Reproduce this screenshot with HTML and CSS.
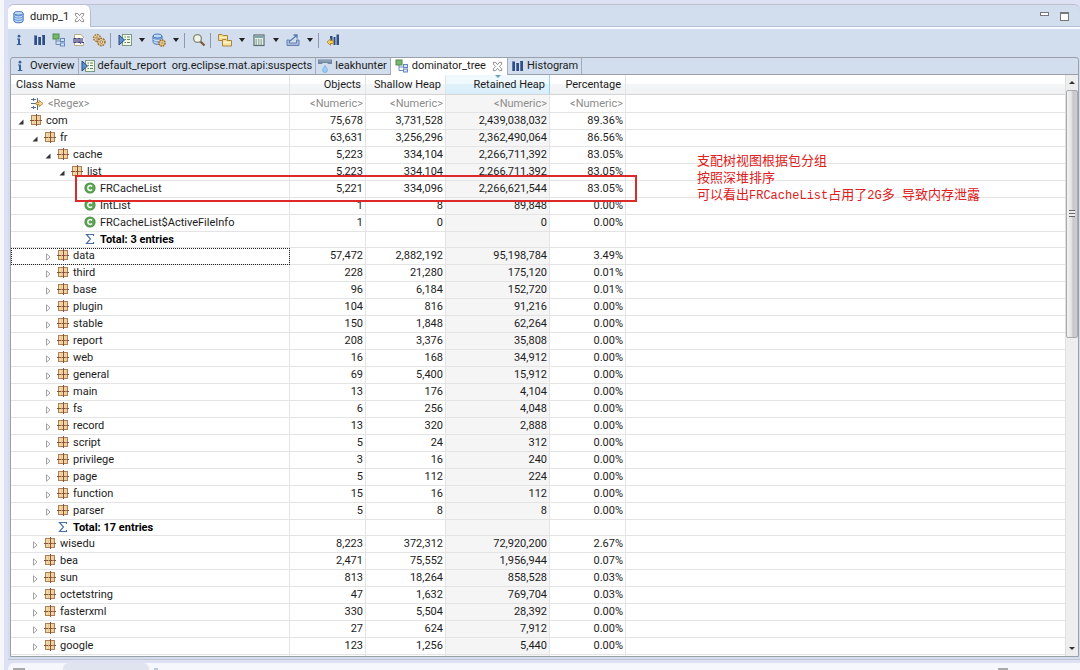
FILE: index.html
```html
<!DOCTYPE html>
<html lang="en">
<head>
<meta charset="utf-8">
<title>dump_1 - dominator_tree</title>
<link rel="stylesheet" href="styles.css">
</head>
<body>
<svg class="defs" aria-hidden="true">
  <symbol id="pkg" viewBox="0 0 12 12"><rect x="1.500" y="1.500" width="9" height="9" fill="#f3d9a6" stroke="#b07f58"/><path d="M6.500 0V12M0 6.500H12" stroke="#8a5038"/><path d="M4.500 2V10M9 2V10" stroke="#e3c08c" stroke-width=".7"/></symbol>
  <symbol id="cls" viewBox="0 0 12 12"><circle cx="6" cy="6" r="5.600" fill="#4d9447"/><circle cx="6" cy="6" r="4.600" fill="#5ba553"/><path d="M8 4.400A2.400 2.400 0 1 0 8 7.600" fill="none" stroke="#fff" stroke-width="1.500"/></symbol>
  <symbol id="sum" viewBox="0 0 12 12"><path d="M9.500 3V1.500H2.500L6.500 6L2.500 10.500H9.500V9" fill="none" stroke="#4a6fa8" stroke-width="1.200"/></symbol>
  <symbol id="open" viewBox="0 0 8 8"><path d="M6.500 1.500V6.500H1.500Z" fill="#333"/></symbol>
  <symbol id="shut" viewBox="0 0 8 8"><path d="M2.500 .8L6 4L2.500 7.200Z" fill="#fff" stroke="#999" stroke-width=".9"/></symbol>
  <symbol id="info" viewBox="0 0 14 14"><path d="M5 5.500H8V11H9.300V12H4.800V11H6V6.500H5Z" fill="#35629b"/><circle cx="7" cy="3.200" r="1.400" fill="#35629b"/></symbol>
  <symbol id="hist" viewBox="0 0 14 14"><path d="M2 2.500H5V12H2ZM6 4H9V12H6ZM10 2H13V12H10Z" fill="#2f4e82"/><path d="M2.500 3V12M6.500 4.500V12M10.500 2.500V12" stroke="#6482b5" stroke-width=".8"/></symbol>
  <symbol id="tree" viewBox="0 0 14 14"><path d="M4 6V11.500H8M4 8H8" fill="none" stroke="#6e8cb8"/><rect x="1" y="1" width="6" height="5" fill="#79b86c" stroke="#4a8d50"/><rect x="8.500" y="5.500" width="4" height="3" fill="#d6e5f5" stroke="#6487bd"/><rect x="8.500" y="10" width="4" height="3" fill="#d6e5f5" stroke="#6487bd"/></symbol>
  <symbol id="oql" viewBox="0 0 14 14"><path d="M2.500 1.500H9L11.500 4V12.500H2.500Z" fill="#fffdf0" stroke="#b4ad8a"/><rect x="1" y="5" width="12" height="5" fill="#e7e7f2"/><path d="M2 5.500H4V9.500H2ZM6 5.500H8V9.500H6ZM10 5V9.500H12M7.300 8.500L9 10.500" fill="none" stroke="#47447d" stroke-width="1.200"/></symbol>
  <symbol id="gears" viewBox="0 0 14 14"><circle cx="5" cy="5" r="3.400" fill="#ead9b2" stroke="#a67c46" stroke-width="1.600" stroke-dasharray="1.800 .8"/><circle cx="5" cy="5" r="1.200" fill="#fff" stroke="#a67c46"/><circle cx="9.300" cy="9" r="3.600" fill="#ecd4a0" stroke="#9c713c" stroke-width="1.600" stroke-dasharray="1.800 .8"/><circle cx="9.300" cy="9" r="1.300" fill="#fff" stroke="#9c713c"/></symbol>
  <symbol id="report" viewBox="0 0 14 14"><rect x="4.500" y="1.500" width="9" height="11" fill="#f4f8e8" stroke="#7b9a83"/><path d="M6.500 4H8M9 4H12M6.500 6.500H8M9 6.500H12M6.500 9.500H8M9 9.500H12" stroke="#5e8a62"/><path d="M1 2V12L6.500 7Z" fill="#6092c8" stroke="#254b80"/></symbol>
  <symbol id="db" viewBox="0 0 14 14"><path d="M2 3V11C2 14 12 14 12 11V3Z" fill="#6fa0de" stroke="#3a68ad"/><path d="M2.500 5.500C3.500 7.500 10.500 7.500 11.500 5.500M2.500 8C3.500 10 10.500 10 11.500 8M2.500 10.500C3.500 12.500 10.500 12.500 11.500 10.500" fill="none" stroke="#dbeafc"/><ellipse cx="7" cy="3" rx="5" ry="2" fill="#c1dbf7" stroke="#4777bb"/></symbol>
  <symbol id="dbgear" viewBox="0 0 14 14"><path d="M1 3V9C1 12 10 12 10 9V3Z" fill="#7eabe1" stroke="#4270b2"/><path d="M1 6C2 8 9 8 10 6M1 8.500C2 10.500 9 10.500 10 8.500" fill="none" stroke="#dceafb"/><ellipse cx="5.500" cy="3" rx="4.500" ry="2" fill="#c1dbf7" stroke="#4777bb"/><circle cx="10" cy="10" r="3" fill="#f2d28c" stroke="#966c2d" stroke-width="1.500" stroke-dasharray="1.600 .7"/><circle cx="10" cy="10" r="1" fill="#fff" stroke="#966c2d" stroke-width=".6"/></symbol>
  <symbol id="search" viewBox="0 0 14 14"><path d="M8 8L12.500 12.500" stroke="#7c5b39" stroke-width="2.200"/><circle cx="5.500" cy="5.500" r="3.900" fill="#eef6ec" stroke="#8a8a75" stroke-width="1.400"/></symbol>
  <symbol id="folders" viewBox="0 0 14 14"><path d="M.5 1.500H4L5 2.500H9.500V7.500H.5Z" fill="#f8dc8b" stroke="#a7853d"/><path d="M4.500 6.500H8L9 7.500H13.500V13H4.500Z" fill="#fae39f" stroke="#a7853d"/><path d="M1.500 4.500H9M5.500 9.500H13" stroke="#fff4cc"/></symbol>
  <symbol id="calc" viewBox="0 0 14 14"><rect x="2" y="2" width="10" height="10.500" fill="#e9f0df" stroke="#5a6d76" stroke-width="1.200"/><rect x="3" y="3" width="8" height="2" fill="#80a7ad"/><path d="M3.500 7H10.500M3.500 9H10.500M3.500 11H10.500" stroke="#557f82" stroke-dasharray="1.500 1"/></symbol>
  <symbol id="export" viewBox="0 0 14 14"><path d="M1 7H3.500V10H10.500V7H13V12.500H1Z" fill="#a9bbdc" stroke="#6680ae"/><path d="M4 8L10.500 2.500M7.500 2H11V5.500" fill="none" stroke="#557bab" stroke-width="1.300"/></symbol>
  <symbol id="histback" viewBox="0 0 14 14"><path d="M4 3H6.500V11H4ZM7.500 4H9.500V12H7.500ZM10.500 1.500H13V12H10.500Z" fill="#2f4e82"/><path d="M1 9L4.500 5.800V7.700H7.500V10.500H4.500V12.500Z" fill="#f5cf6b" stroke="#b37f25" stroke-width=".8"/></symbol>
  <symbol id="leak" viewBox="0 0 14 14"><path d="M0 .5H14V5H10.500L9 4H5L3.500 5H0Z" fill="#71869e"/><path d="M1 2H13" stroke="#a5b5c6"/><path d="M7 6.500C5.500 9 4.500 10 4.500 11A2.400 2.400 0 0 0 9.500 11C9.500 10 8.500 9 7 6.500Z" fill="#9ccdf2" stroke="#6ba8dc" stroke-width=".7"/></symbol>
  <symbol id="close" viewBox="0 0 12 12"><path d="M1.500 1.500H4L6 4L8 1.500H10.500V3.500L8 6L10.500 8.500V10.500H8L6 8L4 10.500H1.500V8.500L4 6L1.500 3.500Z" fill="#fff" stroke="#777" stroke-width=".9"/></symbol>
  <symbol id="filter" viewBox="0 0 14 14"><path d="M1 2.500H6M1 6.500H7M1 10.500H6M3.500 1V4M3.500 9V12M7.500 1V5M7.500 8V13" stroke="#54718f" fill="none"/><path d="M6 5.500H9V3.300L13 6.500L9 9.700V7.500H6Z" fill="#f5d58b" stroke="#b0812f" stroke-width=".8"/></symbol>
</svg>

<main class="editor">
  <header class="titlebar">
    <button class="file-tab"><svg class="ic"><use href="#db"/></svg>dump_1<svg class="x"><use href="#close"/></svg></button>
    <div class="window-tools">
      <button class="min" aria-label="Minimize"></button>
      <button class="max" aria-label="Maximize"></button>
    </div>
  </header>

  <div class="toolbar">
    <button aria-label="Overview"><svg class="ic"><use href="#info"/></svg></button>
    <button aria-label="Histogram"><svg class="ic"><use href="#hist"/></svg></button>
    <button aria-label="Dominator tree"><svg class="ic"><use href="#tree"/></svg></button>
    <button aria-label="Query language"><svg class="ic"><use href="#oql"/></svg></button>
    <button aria-label="Thread overview"><svg class="ic"><use href="#gears"/></svg></button>
    <i class="sep"></i>
    <button aria-label="Reports"><svg class="ic"><use href="#report"/></svg></button><button class="drop" aria-label="Report menu"></button>
    <button aria-label="Query browser"><svg class="ic"><use href="#dbgear"/></svg></button><button class="drop" aria-label="Query menu"></button>
    <i class="sep"></i>
    <button aria-label="Search"><svg class="ic"><use href="#search"/></svg></button>
    <i class="sep"></i>
    <button aria-label="Group by"><svg class="ic"><use href="#folders"/></svg></button><button class="drop" aria-label="Group menu"></button>
    <button aria-label="Calculate retained size"><svg class="ic"><use href="#calc"/></svg></button><button class="drop" aria-label="Calculate menu"></button>
    <button aria-label="Export"><svg class="ic"><use href="#export"/></svg></button><button class="drop" aria-label="Export menu"></button>
    <i class="sep"></i>
    <button aria-label="Compare"><svg class="ic"><use href="#histback"/></svg></button>
  </div>

  <section class="pane">
    <nav class="tabs">
      <button><svg class="ic"><use href="#info"/></svg>Overview</button>
      <button><svg class="ic"><use href="#report"/></svg>default_report&nbsp; org.eclipse.mat.api:suspects</button>
      <button><svg class="ic"><use href="#leak"/></svg>leakhunter</button>
      <button class="active"><svg class="ic"><use href="#tree"/></svg>dominator_tree<svg class="x"><use href="#close"/></svg></button>
      <button><svg class="ic"><use href="#hist"/></svg>Histogram</button>
    </nav>

    <div class="view">
      <div class="grid">
        <table>
          <colgroup><col class="c-name"><col class="c-obj"><col class="c-shallow"><col class="c-ret"><col class="c-pct"><col></colgroup>
          <thead>
            <tr><th>Class Name</th><th>Objects</th><th>Shallow Heap</th><th class="sorted">Retained Heap</th><th>Percentage</th><th></th></tr>
          </thead>
          <tbody>
            <tr class="filters"><td><div class="regex"><svg class="ic"><use href="#filter"/></svg><input aria-label="Class name filter" placeholder="&lt;Regex&gt;"></div></td><td><input aria-label="Objects filter" placeholder="&lt;Numeric&gt;"></td><td><input aria-label="Shallow heap filter" placeholder="&lt;Numeric&gt;"></td><td><input aria-label="Retained heap filter" placeholder="&lt;Numeric&gt;"></td><td><input aria-label="Percentage filter" placeholder="&lt;Numeric&gt;"></td><td></td></tr>
            <tr><td><div class="n l1"><svg class="tw"><use href="#open"/></svg><svg class="ni"><use href="#pkg"/></svg>com</div></td><td>75,678</td><td>3,731,528</td><td>2,439,038,032</td><td>89.36%</td><td></td></tr>
            <tr><td><div class="n l2"><svg class="tw"><use href="#open"/></svg><svg class="ni"><use href="#pkg"/></svg>fr</div></td><td>63,631</td><td>3,256,296</td><td>2,362,490,064</td><td>86.56%</td><td></td></tr>
            <tr><td><div class="n l3"><svg class="tw"><use href="#open"/></svg><svg class="ni"><use href="#pkg"/></svg>cache</div></td><td>5,223</td><td>334,104</td><td>2,266,711,392</td><td>83.05%</td><td></td></tr>
            <tr><td><div class="n l4"><svg class="tw"><use href="#open"/></svg><svg class="ni"><use href="#pkg"/></svg>list</div></td><td>5,223</td><td>334,104</td><td>2,266,711,392</td><td>83.05%</td><td></td></tr>
            <tr><td><div class="n l5"><svg class="tw"></svg><svg class="ni"><use href="#cls"/></svg>FRCacheList</div></td><td>5,221</td><td>334,096</td><td>2,266,621,544</td><td>83.05%</td><td></td></tr>
            <tr><td><div class="n l5"><svg class="tw"></svg><svg class="ni"><use href="#cls"/></svg>IntList</div></td><td>1</td><td>8</td><td>89,848</td><td>0.00%</td><td></td></tr>
            <tr><td><div class="n l5"><svg class="tw"></svg><svg class="ni"><use href="#cls"/></svg>FRCacheList$ActiveFileInfo</div></td><td>1</td><td>0</td><td>0</td><td>0.00%</td><td></td></tr>
            <tr class="total"><td><div class="n l5"><svg class="tw"></svg><svg class="ni"><use href="#sum"/></svg>Total: 3 entries</div></td><td></td><td></td><td></td><td></td><td></td></tr>
            <tr class="focus"><td><div class="n l3"><svg class="tw"><use href="#shut"/></svg><svg class="ni"><use href="#pkg"/></svg>data</div></td><td>57,472</td><td>2,882,192</td><td>95,198,784</td><td>3.49%</td><td></td></tr>
            <tr><td><div class="n l3"><svg class="tw"><use href="#shut"/></svg><svg class="ni"><use href="#pkg"/></svg>third</div></td><td>228</td><td>21,280</td><td>175,120</td><td>0.01%</td><td></td></tr>
            <tr><td><div class="n l3"><svg class="tw"><use href="#shut"/></svg><svg class="ni"><use href="#pkg"/></svg>base</div></td><td>96</td><td>6,184</td><td>152,720</td><td>0.01%</td><td></td></tr>
            <tr><td><div class="n l3"><svg class="tw"><use href="#shut"/></svg><svg class="ni"><use href="#pkg"/></svg>plugin</div></td><td>104</td><td>816</td><td>91,216</td><td>0.00%</td><td></td></tr>
            <tr><td><div class="n l3"><svg class="tw"><use href="#shut"/></svg><svg class="ni"><use href="#pkg"/></svg>stable</div></td><td>150</td><td>1,848</td><td>62,264</td><td>0.00%</td><td></td></tr>
            <tr><td><div class="n l3"><svg class="tw"><use href="#shut"/></svg><svg class="ni"><use href="#pkg"/></svg>report</div></td><td>208</td><td>3,376</td><td>35,808</td><td>0.00%</td><td></td></tr>
            <tr><td><div class="n l3"><svg class="tw"><use href="#shut"/></svg><svg class="ni"><use href="#pkg"/></svg>web</div></td><td>16</td><td>168</td><td>34,912</td><td>0.00%</td><td></td></tr>
            <tr><td><div class="n l3"><svg class="tw"><use href="#shut"/></svg><svg class="ni"><use href="#pkg"/></svg>general</div></td><td>69</td><td>5,400</td><td>15,912</td><td>0.00%</td><td></td></tr>
            <tr><td><div class="n l3"><svg class="tw"><use href="#shut"/></svg><svg class="ni"><use href="#pkg"/></svg>main</div></td><td>13</td><td>176</td><td>4,104</td><td>0.00%</td><td></td></tr>
            <tr><td><div class="n l3"><svg class="tw"><use href="#shut"/></svg><svg class="ni"><use href="#pkg"/></svg>fs</div></td><td>6</td><td>256</td><td>4,048</td><td>0.00%</td><td></td></tr>
            <tr><td><div class="n l3"><svg class="tw"><use href="#shut"/></svg><svg class="ni"><use href="#pkg"/></svg>record</div></td><td>13</td><td>320</td><td>2,888</td><td>0.00%</td><td></td></tr>
            <tr><td><div class="n l3"><svg class="tw"><use href="#shut"/></svg><svg class="ni"><use href="#pkg"/></svg>script</div></td><td>5</td><td>24</td><td>312</td><td>0.00%</td><td></td></tr>
            <tr><td><div class="n l3"><svg class="tw"><use href="#shut"/></svg><svg class="ni"><use href="#pkg"/></svg>privilege</div></td><td>3</td><td>16</td><td>240</td><td>0.00%</td><td></td></tr>
            <tr><td><div class="n l3"><svg class="tw"><use href="#shut"/></svg><svg class="ni"><use href="#pkg"/></svg>page</div></td><td>5</td><td>112</td><td>224</td><td>0.00%</td><td></td></tr>
            <tr><td><div class="n l3"><svg class="tw"><use href="#shut"/></svg><svg class="ni"><use href="#pkg"/></svg>function</div></td><td>15</td><td>16</td><td>112</td><td>0.00%</td><td></td></tr>
            <tr><td><div class="n l3"><svg class="tw"><use href="#shut"/></svg><svg class="ni"><use href="#pkg"/></svg>parser</div></td><td>5</td><td>8</td><td>8</td><td>0.00%</td><td></td></tr>
            <tr class="total"><td><div class="n l3"><svg class="tw"></svg><svg class="ni"><use href="#sum"/></svg>Total: 17 entries</div></td><td></td><td></td><td></td><td></td><td></td></tr>
            <tr><td><div class="n l2"><svg class="tw"><use href="#shut"/></svg><svg class="ni"><use href="#pkg"/></svg>wisedu</div></td><td>8,223</td><td>372,312</td><td>72,920,200</td><td>2.67%</td><td></td></tr>
            <tr><td><div class="n l2"><svg class="tw"><use href="#shut"/></svg><svg class="ni"><use href="#pkg"/></svg>bea</div></td><td>2,471</td><td>75,552</td><td>1,956,944</td><td>0.07%</td><td></td></tr>
            <tr><td><div class="n l2"><svg class="tw"><use href="#shut"/></svg><svg class="ni"><use href="#pkg"/></svg>sun</div></td><td>813</td><td>18,264</td><td>858,528</td><td>0.03%</td><td></td></tr>
            <tr><td><div class="n l2"><svg class="tw"><use href="#shut"/></svg><svg class="ni"><use href="#pkg"/></svg>octetstring</div></td><td>47</td><td>1,632</td><td>769,704</td><td>0.03%</td><td></td></tr>
            <tr><td><div class="n l2"><svg class="tw"><use href="#shut"/></svg><svg class="ni"><use href="#pkg"/></svg>fasterxml</div></td><td>330</td><td>5,504</td><td>28,392</td><td>0.00%</td><td></td></tr>
            <tr><td><div class="n l2"><svg class="tw"><use href="#shut"/></svg><svg class="ni"><use href="#pkg"/></svg>rsa</div></td><td>27</td><td>624</td><td>7,912</td><td>0.00%</td><td></td></tr>
            <tr><td><div class="n l2"><svg class="tw"><use href="#shut"/></svg><svg class="ni"><use href="#pkg"/></svg>google</div></td><td>123</td><td>1,256</td><td>5,440</td><td>0.00%</td><td></td></tr>
            <tr><td><div class="n l2"><svg class="tw"></svg><svg class="ni"><use href="#pkg"/></svg></div></td><td></td><td></td><td></td><td></td><td></td></tr>
          </tbody>
        </table>
        <div class="mark"></div>
        <p class="note">支配树视图根据包分组<br>按照深堆排序<br>可以看出<span>FRCacheList</span>占用了<span>2G</span>多<span> </span>导致内存泄露</p>
      </div>
      <div class="scrollbar">
        <button class="up" aria-label="Scroll up"></button>
        <div class="track"><div class="thumb"><i></i></div></div>
        <button class="down" aria-label="Scroll down"></button>
      </div>
    </div>
  </section>
</main>
<footer class="dock"><i class="dock-icon"></i><i class="dock-tab"></i><i class="dock-icon pale"></i><i class="dock-icon end"></i></footer>
</body>
</html>
```
FILE: styles.css
```css
* { box-sizing: border-box; }
body {
  margin: 0;
  height: 100vh;
  display: flex;
  flex-direction: column;
  overflow: hidden;
  padding: 4px 0 0 8px;
  background: linear-gradient(90deg, #f6f7fd 4px, #dde1f3 4px);
  font: 11px/16px Roboto, "Noto Sans", sans-serif;
  color: #1c1c1c;
}
button {
  margin: 0;
  padding: 0;
  border: 0;
  background: none;
  font: inherit;
  color: inherit;
}
.defs { position: absolute; width: 0; height: 0; }
.ic { width: 14px; height: 14px; flex: none; }
.x { width: 11px; height: 11px; flex: none; }

.editor {
  flex: 1;
  min-height: 0;
  display: flex;
  flex-direction: column;
  padding-bottom: 2px;
  background: #d2deed;
  border-top: 1px solid #bcbfcc;
  border-bottom: 1px solid #c2c5d0;
  border-radius: 6px 6px 0 0;
}
.titlebar {
  display: flex;
  justify-content: space-between;
  height: 22px;
  flex: none;
  border-bottom: 1px solid #b5c0d6;
}
.file-tab {
  display: flex;
  align-items: center;
  height: 24px;
  gap: 5px;
  padding: 0 5px 0 4px;
  background: #fff;
  border-right: 1px solid #b5c0d6;
  border-radius: 6px 6px 0 0;
}
.file-tab .ic { width: 13px; }
.window-tools { display: flex; gap: 11px; padding: 7px 11px 0 0; }
.min { width: 9px; height: 4px; border: 1px solid #777; background: #fff; }
.max { width: 9px; height: 9px; border: 1px solid #777; border-top-width: 2px; background: #fff; }

.toolbar {
  display: flex;
  align-items: center;
  height: 30px;
  flex: none;
  padding: 0 1px 6px;
  border-top: 2px solid #f7faff;
}
.toolbar button { width: 20px; height: 20px; display: grid; place-items: center; }
.toolbar .drop { width: 14px; }
.drop::before {
  content: "";
  border: 3px solid transparent;
  border-top: 4px solid #222;
  border-bottom: 0;
}
.sep { width: 1px; height: 15px; margin: 0 4px 0 1px; background: #8e99aa; }

.pane {
  flex: 1;
  min-height: 0;
  display: flex;
  flex-direction: column;
  margin: 0 1px 0 2px;
  border: 1px solid #9a9fa8;
  border-radius: 3px 3px 0 0;
}
.tabs { display: flex; height: 17px; flex: none; border-bottom: 1px solid #9a9fa8; }
.tabs button {
  display: flex;
  align-items: center;
  gap: 3px;
  height: 16px;
  padding: 0 3px 0 2px;
  border-right: 1px solid #a3acba;
  white-space: nowrap;
}
.tabs .active { height: 18px; background: #fff; padding: 0 4px 2px; }
.tabs .x { margin-left: 3px; }

.view { flex: 1; min-height: 0; display: flex; background: #fff; }
.grid { position: relative; flex: 1; min-width: 0; overflow: hidden; }
table { width: 100%; table-layout: fixed; border-collapse: separate; border-spacing: 0; }
.c-name { width: 279px; }
.c-obj { width: 76px; }
.c-shallow { width: 80px; }
.c-ret { width: 104px; }
.c-pct { width: 76px; }
th, td {
  height: 17px;
  padding: 0 2px 0 0;
  border-right: 1px solid #e4e4e4;
  border-bottom: 1px solid #e4e4e4;
  text-align: right;
  vertical-align: top;
  line-height: 15px;
  white-space: nowrap;
  overflow: hidden;
}
th {
  height: 20px;
  padding: 0 4px 0 5px;
  vertical-align: middle;
  font-weight: 400;
  background: linear-gradient(#fff 45%, #f4f5f6 50%, #f1f2f4);
  border-bottom-color: #d5d5d5;
}
th:first-child, td:first-child { text-align: left; }
th:last-child, td:last-child { border-right: 0; }
.sorted {
  position: relative;
  background: linear-gradient(#f0f9fe 45%, #dff1fb 50%, #d9eefa);
  border-right-color: #9ad3ee;
}
.sorted::before {
  content: "";
  position: absolute;
  top: 0;
  left: 50%;
  margin-left: -3px;
  border: 3px solid transparent;
  border-top: 3px solid #6a9fc0;
  border-bottom: 0;
}
td:nth-child(4) { background: #f5f5f5; }
.filters td { height: 18px; }
.regex { display: flex; align-items: center; gap: 4px; padding-left: 19px; }
input {
  display: block;
  width: 100%;
  height: 17px;
  margin: 0;
  padding: 0;
  border: 0;
  background: none;
  font: inherit;
  text-align: inherit;
}
input::placeholder { color: #8c8c8c; opacity: 1; }
.total td { height: 16px; font-weight: 700; color: #000; }
.n { display: flex; align-items: center; height: 15px; }
.tw { width: 8px; height: 8px; margin: 2px 5px 0 0; flex: none; }
.ni { width: 12px; height: 12px; margin: 0 4px 2px 0; flex: none; }
.l1 { padding-left: 6px; }
.l2 { padding-left: 20px; }
.l3 { padding-left: 33px; }
.l4 { padding-left: 47px; }
.l5 { padding-left: 60px; }
.focus td:first-child { outline: 1px dotted #222; outline-offset: -1px; }

.mark {
  position: absolute;
  left: 64px;
  top: 100px;
  width: 562px;
  height: 27px;
  border: 2px solid #dc2a2a;
}
.note {
  position: absolute;
  left: 686px;
  top: 76px;
  margin: 0;
  font: 13px/17px "Noto Sans CJK SC", sans-serif;
  color: #dc2020;
  white-space: pre;
}
.note span { font: 12px/16px "Liberation Mono", monospace; }

.scrollbar {
  display: flex;
  flex-direction: column;
  width: 13px;
  flex: none;
  background: #eee;
  border-left: 1px solid #e0e0e0;
}
.scrollbar button { height: 15px; display: grid; place-items: center; }
.up::before, .down::before { content: ""; border: 3px solid transparent; }
.up::before { border-top: 0; border-bottom: 3px solid #333; }
.down::before { border-bottom: 0; border-top: 3px solid #333; }
.track { flex: 1; }
.thumb {
  display: grid;
  place-items: center;
  height: 45%;
  border: 1px solid #a9a9a9;
  border-radius: 2px;
  background: linear-gradient(90deg, #f4f4f4, #e3e3e6 45%, #c6c6cb 60%, #cfcfd3);
}
.thumb i { width: 6px; height: 7px; background: repeating-linear-gradient(#666 0 1px, #eee 1px 3px); }

.dock {
  display: flex;
  align-items: flex-end;
  height: 7px;
  flex: none;
  margin-top: 3px;
  background: #f5f7fd;
  border-radius: 6px 0 0 0;
}
.dock-tab { width: 86px; height: 7px; margin-left: 38px; background: #dfe4ef; border-radius: 6px 6px 0 0; }
.dock-icon { width: 12px; height: 2px; margin-left: 5px; background: #aaa; }
.dock-icon.pale { width: 4px; background: #b5cbe0; }
.dock-icon.end { width: 10px; margin: 0 72px 0 auto; }
```
